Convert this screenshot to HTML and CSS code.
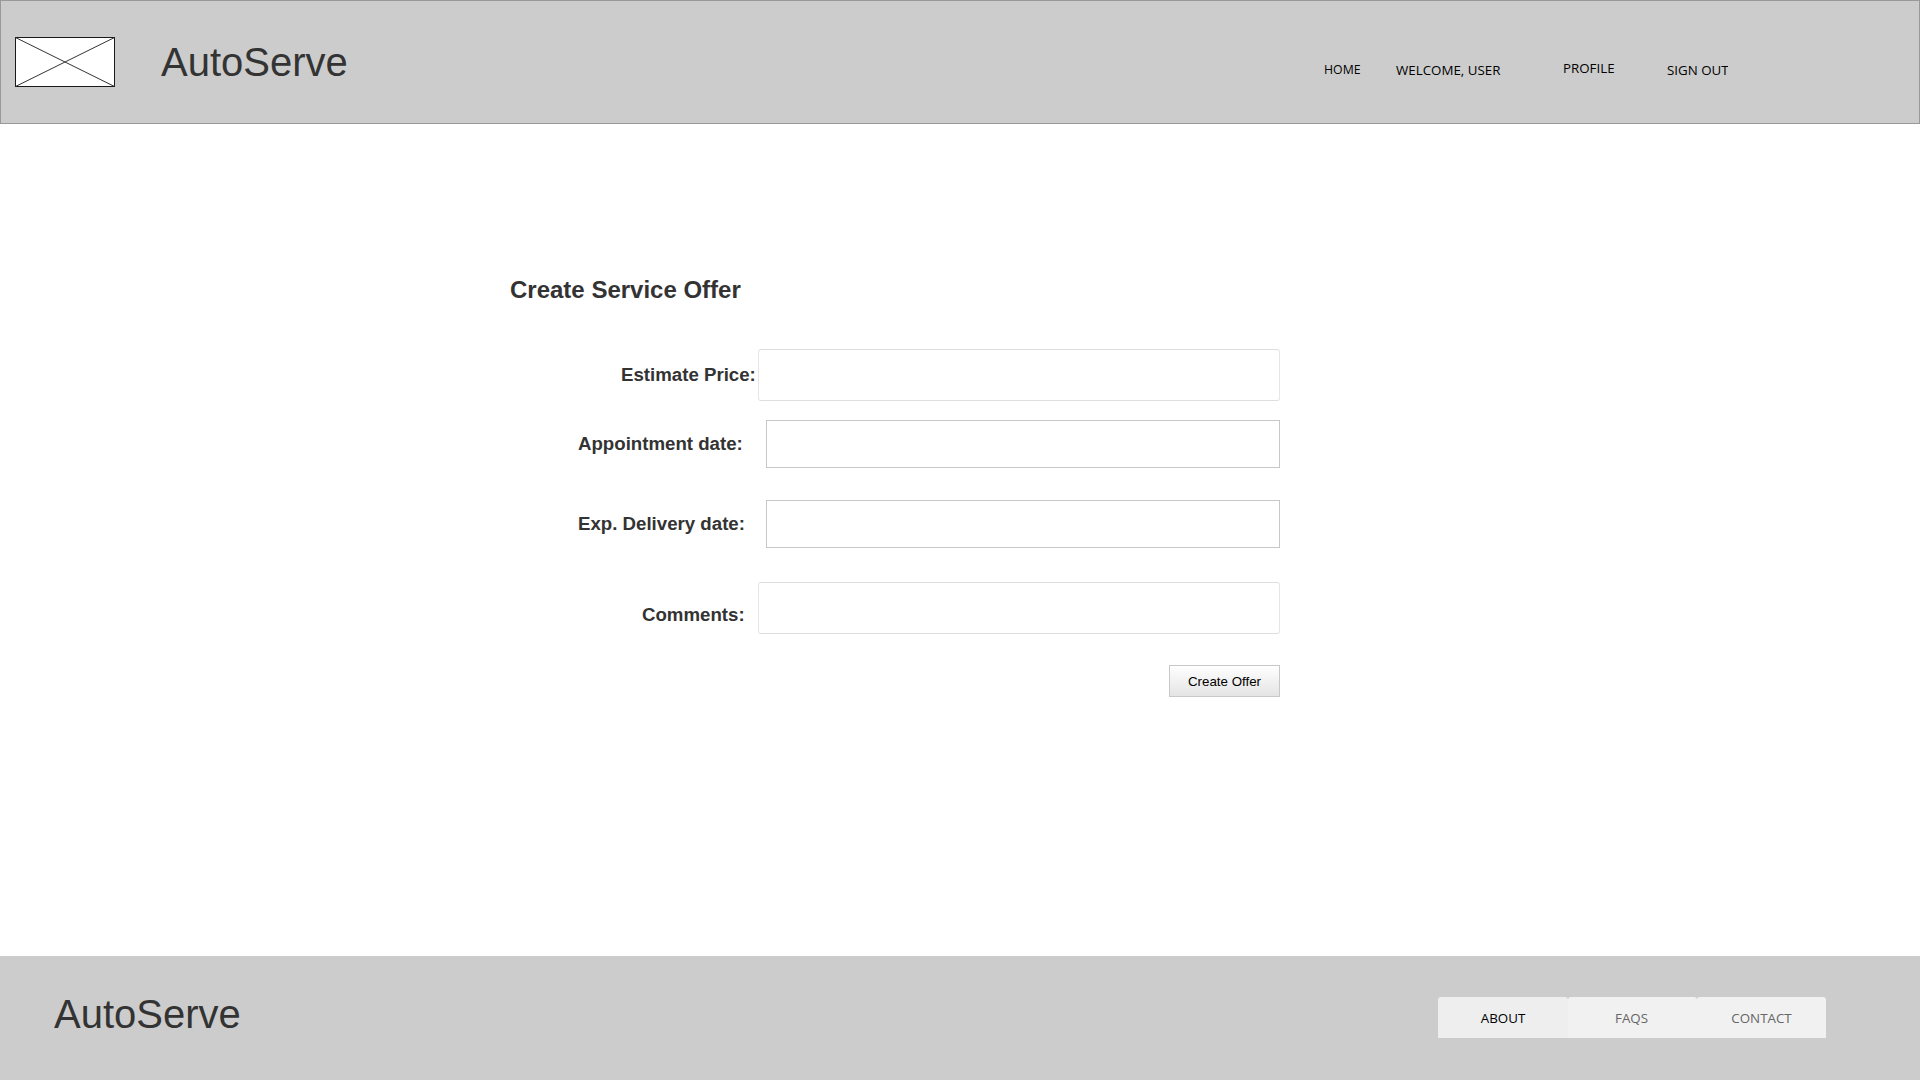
FILE: index.html
```
<!DOCTYPE html>
<html lang="en">
<head>
<meta charset="utf-8">
<title>AutoServe</title>
<link rel="stylesheet" href="styles.css">
</head>
<body>
<header class="header">
  <svg class="logo" width="100" height="50" viewBox="0 0 100 50">
    <rect x=".5" y=".5" width="99" height="49" fill="#fff" stroke="#1a1a1a"/>
    <path d="M.5 .5L99.5 49.5M99.5 .5L.5 49.5" stroke="#333" stroke-width="1" fill="none"/>
  </svg>
  <div class="brand">AutoServe</div>
  <nav class="nav">
    <a class="home">HOME</a>
    <a class="welcome">WELCOME, USER</a>
    <a class="profile">PROFILE</a>
    <a class="signout">SIGN OUT</a>
  </nav>
</header>
<main class="main">
  <h1 class="title">Create Service Offer</h1>
  <form class="form">
    <div class="row price">
      <label for="price">Estimate Price:</label>
      <input id="price" class="field rounded" type="text">
    </div>
    <div class="row appointment">
      <label for="appointment">Appointment date:</label>
      <input id="appointment" class="field" type="text">
    </div>
    <div class="row delivery">
      <label for="delivery">Exp. Delivery date:</label>
      <input id="delivery" class="field" type="text">
    </div>
    <div class="row comments">
      <label for="comments">Comments:</label>
      <input id="comments" class="field rounded" type="text">
    </div>
    <button class="submit" type="button">Create Offer</button>
  </form>
</main>
<footer class="footer">
  <div class="brand">AutoServe</div>
  <nav class="tabs">
    <a class="tab active">ABOUT</a>
    <a class="tab faqs">FAQS</a>
    <a class="tab">CONTACT</a>
  </nav>
</footer>
</body>
</html>
```
FILE: styles.css
```
* {
  box-sizing: border-box;
}

body {
  margin: 0;
  height: 1080px;
  display: flex;
  flex-direction: column;
  overflow: hidden;
  background: #fff;
  color: #333;
  font-family: "Liberation Sans", Arial, sans-serif;
}

.header {
  height: 124px;
  display: flex;
  align-items: flex-start;
  padding: 36px 0 0 14px;
  background: #ccc;
  border: 1px solid #999;
}

.logo {
  flex: none;
}

.brand {
  font-size: 40px;
  line-height: 46px;
}

.header .brand {
  width: 240px;
  margin: 2px 0 0 46px;
}

.nav {
  display: flex;
  align-items: flex-start;
  margin: 24px 0 0 auto;
  width: 595px;
  color: #000;
  font: 13.333px/18px "Open Sans", sans-serif;
  white-space: nowrap;
}

.nav a {
  display: block;
  height: 20px;
  flex: none;
}

.nav .home {
  width: 72px;
  font-size: 12.3px;
}

.nav .welcome {
  width: 167px;
}

.nav .profile {
  width: 104px;
  margin-top: -2px;
}

.nav .signout {
  width: 61px;
  overflow: hidden;
}

.main {
  flex: 1;
  width: 770px;
  margin-left: 510px;
  padding-top: 152px;
}

.title {
  margin: 0;
  font-size: 24px;
  line-height: 28px;
}

.form {
  display: flex;
  flex-direction: column;
  margin-top: 45px;
}

.row {
  display: flex;
  align-items: flex-start;
  justify-content: space-between;
}

.row label {
  font-size: 18.667px;
  line-height: 22px;
  font-weight: bold;
  white-space: nowrap;
}

.price label {
  margin: 15px 0 0 111px;
}

.appointment {
  margin-top: 19px;
}

.appointment label {
  margin: 13px 0 0 68px;
}

.delivery {
  margin-top: 32px;
}

.delivery label {
  margin: 13px 0 0 68px;
}

.comments {
  margin-top: 34px;
}

.comments label {
  margin: 22px 0 0 132px;
}

.field {
  width: 514px;
  height: 48px;
  flex: none;
  padding: 0 10px;
  border: 1px solid #c8c8c8;
  background: #fff;
  outline: none;
}

.field.rounded {
  width: 522.5px;
  height: 52px;
  border-color: #dedede #e6e6e6;
  border-radius: 3px;
}

.submit {
  align-self: flex-end;
  width: 111px;
  height: 32px;
  margin-top: 31px;
  padding: 1px 0 0;
  border: 1px solid #c8c8c8;
  background: linear-gradient(#fff, #e4e4e4);
  color: #000;
  font: 13.333px/21px "Liberation Sans", Arial, sans-serif;
}

.footer {
  height: 124px;
  display: flex;
  align-items: flex-start;
  justify-content: space-between;
  padding: 35px 94px 0 54px;
  background: #ccc;
}

.tabs {
  display: flex;
  margin-top: 6px;
}

.tab {
  width: 129px;
  height: 41px;
  padding-top: 12px;
  border-radius: 3px 3px 0 0;
  background: #f1f1f1;
  color: #666;
  font: 13.333px/18px "Open Sans", sans-serif;
  text-align: center;
}

.tab.active {
  width: 130px;
  background: #eee;
  color: #000;
}

.tab.faqs {
  padding-right: 2px;
}
```
